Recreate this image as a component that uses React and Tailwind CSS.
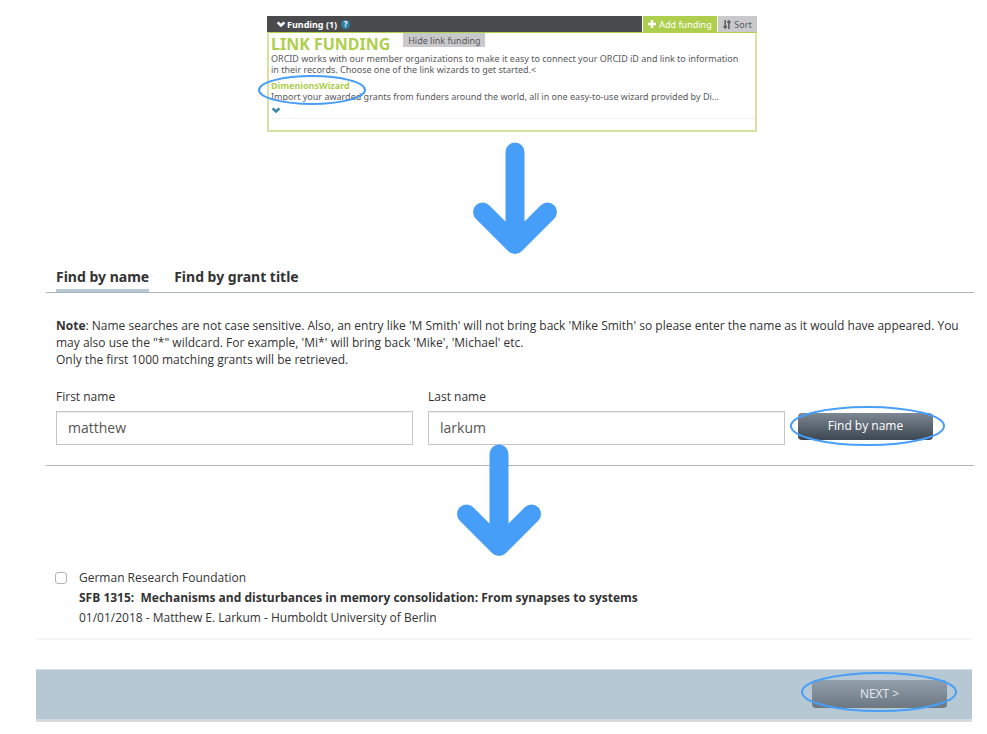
import React, { useState } from "react";

function Ellipse({ className }) {
  return (
    <svg
      className={`pointer-events-none absolute overflow-visible ${className}`}
      viewBox="0 0 100 100"
      preserveAspectRatio="none"
      fill="none"
      stroke="#479ef8"
      strokeWidth="2"
      aria-hidden="true"
    >
      <ellipse cx="50" cy="50" rx="50" ry="50" vectorEffect="non-scaling-stroke" />
    </svg>
  );
}

function Arrow() {
  return (
    <svg
      className="block h-28 w-[84px]"
      viewBox="0 0 84 112"
      fill="none"
      stroke="#479ef8"
      strokeWidth="19"
      strokeLinecap="round"
      strokeLinejoin="round"
      aria-hidden="true"
    >
      <path d="M42 10V101M9.500 70L42 102.500L74.500 70" />
    </svg>
  );
}

function Chevron({ className }) {
  return (
    <svg className={className} viewBox="0 0 10 8" fill="none" stroke="currentColor" strokeWidth="2.600" aria-hidden="true">
      <path d="M1.600 2.400L5 5.400L8.400 2.400" />
    </svg>
  );
}

function FundingPanel() {
  return (
    <section className="mx-auto w-[490px] font-['Noto_Sans',sans-serif] text-[9px] leading-[11px] text-[#58595b]">
      <div className="flex h-4 bg-[#4a4b4d]">
        <h2 className="flex flex-1 items-center gap-1 pl-[9px] font-bold text-white">
          <span className="flex items-center gap-px">
            <Chevron className="h-2 w-[10px]" />
            Funding (1)
          </span>
          <span className="flex h-[9px] w-[9px] items-center justify-center rounded-full bg-[#2e7fa6] text-[8px] leading-none">
            ?
          </span>
        </h2>
        <button className="flex w-[75px] items-center justify-center gap-[3px] border-l border-white bg-[#aecf4e] text-white">
          <svg className="h-2 w-2" viewBox="0 0 8 8" stroke="currentColor" strokeWidth="2.400" aria-hidden="true">
            <path d="M4 0V8M0 4H8" />
          </svg>
          Add funding
        </button>
        <button className="flex w-10 items-center justify-center gap-[3px] border-l border-white bg-[#c9c9cb]">
          <svg className="h-[9px] w-2" viewBox="0 0 8 9" fill="none" stroke="currentColor" strokeWidth="1.500" aria-hidden="true">
            <path d="M2.200 0V8M.6 6.200L2.200 8L3.800 6.200M5.900 9V1M4.300 2.800L5.900 1L7.500 2.800" />
          </svg>
          Sort
        </button>
      </div>
      <div className="border-2 border-t border-[#d5e3a1] border-t-[#aecf4e] pb-[11px] pl-0.5">
        <div className="flex h-5 items-start gap-[13px]">
          <h3 className="text-[16px] leading-[22px] font-bold text-[#aecf4e]">LINK FUNDING</h3>
          <button className="h-3.5 w-[82px] bg-[#c9c9cb]">Hide link funding</button>
        </div>
        <p className="pr-2">
          ORCID works with our member organizations to make it easy to connect your ORCID iD and link to information
          in their records. Choose one of the link wizards to get started.&lt;
        </p>
        <div className="relative pt-[5px]">
          <a href="#dimensions" className="block w-fit font-bold text-[#aecf4e]">DimenionsWizard</a>
          <p>Import your awarded grants from funders around the world, all in one easy-to-use wizard provided by Di...</p>
          <Ellipse className="-left-3 top-px h-7 w-[106px]" />
        </div>
        <button aria-label="Show more" className="mt-1 block text-[#3d86a8]">
          <Chevron className="h-2 w-[10px]" />
        </button>
        <hr className="mt-1 border-[#f2f2f2]" />
      </div>
    </section>
  );
}

function GradientButton({ className, children }) {
  return (
    <button className={`block w-[135px] rounded text-[12px] leading-4 ${className}`}>{children}</button>
  );
}

function SearchForm() {
  const [first, setFirst] = useState("matthew");
  const [last, setLast] = useState("larkum");
  const field =
    "block h-[34px] w-full border border-[#c4c5c7] bg-white px-[11px] pb-0.5 text-[14px] text-[#555555] shadow-[inset_0_1px_1px_rgba(0,0,0,0.06)] outline-none";
  return (
    <section className="mr-[13px] ml-[46px]">
      <nav className="flex gap-[25px] border-b border-[#adb1b9] pl-[10px] font-['Noto_Sans',sans-serif] text-[14px] leading-5 font-bold">
        <button className="border-b-[3px] border-[#b6c9d6] pb-0.5">Find by name</button>
        <button className="border-b-[3px] border-transparent pb-0.5">Find by grant title</button>
      </nav>
      <div className="border-b border-[#b3b4b9] pt-6 pb-5 pl-[10px]">
        <p className="text-[12px] leading-[17px]">
          <b>Note</b>: Name searches are not case sensitive. Also, an entry like 'M Smith' will not bring back 'Mike
          Smith' so please enter the name as it would have appeared. You may also use the "*" wildcard. For example,
          'Mi*' will bring back 'Mike', 'Michael' etc.
          <br />
          Only the first 1000 matching grants will be retrieved.
        </p>
        <form className="mt-5 flex items-end gap-[15px] pr-[41px]" onSubmit={(e) => e.preventDefault()}>
          <label className="flex-1 text-[12px] leading-[17px]">
            <span className="mb-1.5 block">First name</span>
            <input className={field} value={first} onChange={(e) => setFirst(e.target.value)} />
          </label>
          <label className="flex-1 text-[12px] leading-[17px]">
            <span className="mb-1.5 block">Last name</span>
            <input className={field} value={last} onChange={(e) => setLast(e.target.value)} />
          </label>
          <div className="relative -ml-0.5 pb-[5px]">
            <GradientButton className="h-[27px] bg-linear-to-b from-[#7d8893] to-[#3d4751] pb-0.5 font-medium text-white">
              Find by name
            </GradientButton>
            <Ellipse className="-top-1.5 -left-[7px] h-[38px] w-[153px]" />
          </div>
        </form>
      </div>
    </section>
  );
}

function Results() {
  return (
    <section className="mr-[15px] ml-9 border-b-2 border-[#f6f6fa] pb-2.5 pl-[19px]">
      <label className="flex gap-3 text-[12px] leading-5">
        <input
          type="checkbox"
          className="mt-1 h-3 w-3 shrink-0 appearance-none rounded-[3px] border border-[#b4b4b4] bg-white checked:bg-[#479ef8]"
        />
        <span>
          <span className="block">German Research Foundation</span>
          <b className="block">SFB 1315:&nbsp; Mechanisms and disturbances in memory consolidation: From synapses to systems</b>
          <span className="block">01/01/2018 - Matthew E. Larkum - Humboldt University of Berlin</span>
        </span>
      </label>
    </section>
  );
}

export default function App() {
  return (
    <main className="bg-white pt-4 pb-3 font-['Open_Sans','Noto_Sans',sans-serif] text-[#333333]">
      <div className="pl-[37px]">
        <FundingPanel />
      </div>
      <div className="flex justify-center pt-2.5 pl-[43px]">
        <Arrow />
      </div>
      <div className="pt-[13px]">
        <SearchForm />
      </div>
      <div className="relative -mt-[22px] flex justify-center pl-[11px]">
        <Arrow />
      </div>
      <div className="pt-3">
        <Results />
      </div>
      <footer className="mt-[29px] mr-[15px] ml-9 flex justify-end border-t border-b-3 border-t-[#d3dde4] border-b-[#d8dbdd] bg-[#b6c8d4] pt-2.5 pr-[25px] pb-[11px]">
        <div className="relative">
          <GradientButton className="h-7 bg-linear-to-b from-[#929fac] to-[#6d7881] font-medium text-[#e4ebf1]">NEXT &gt;</GradientButton>
          <Ellipse className="-top-[7px] -left-2.5 h-[38px] w-[154px]" />
        </div>
      </footer>
    </main>
  );
}
